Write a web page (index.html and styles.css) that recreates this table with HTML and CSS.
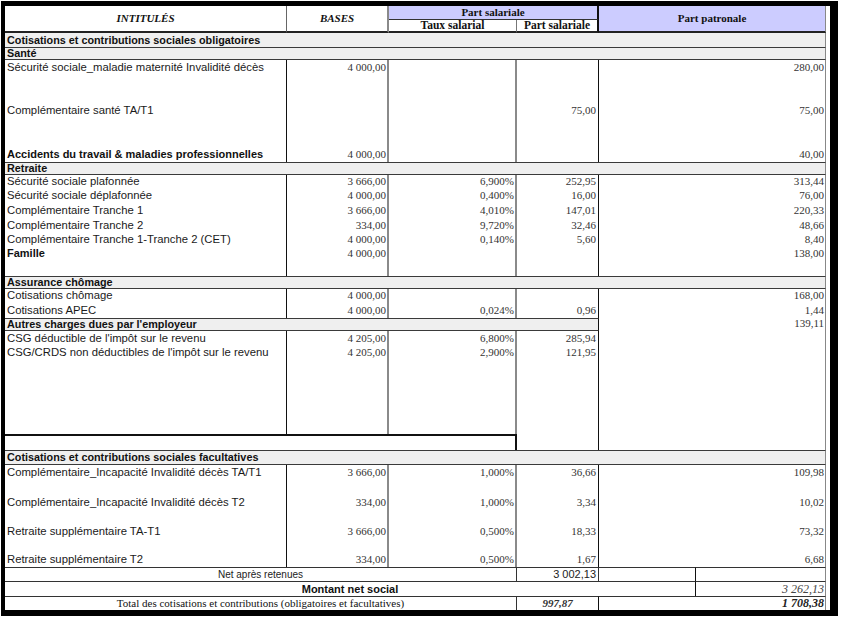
FILE: index.html
```html
<!DOCTYPE html>
<html lang="fr">
<head>
<meta charset="utf-8">
<title>Cotisations et contributions sociales</title>
<link rel="stylesheet" href="styles.css">
</head>
<body>
<div class="frame">
<table class="sheet">
<colgroup>
<col class="c-lab"><col class="c-base"><col class="c-taux"><col class="c-ps"><col class="c-pp1"><col class="c-pp2">
</colgroup>
<thead>
<tr class="h14">
<th class="hd hd-int" rowspan="2">INTITULÉS</th>
<th class="hd hd-bases" rowspan="2">BASES</th>
<th class="hd hd-ps" colspan="2">Part salariale</th>
<th class="hd hd-pp" colspan="2" rowspan="2">Part patronale</th>
</tr>
<tr class="h12">
<th class="hd hd-taux">Taux salarial</th>
<th class="hd hd-ps2">Part salariale</th>
</tr>
</thead>
<tbody>
<tr class="h15"><td class="sec" colspan="6">Cotisations et contributions sociales obligatoires</td></tr>
<tr class="h12"><td class="sec" colspan="6">Santé</td></tr>
<tr class="h15"><td class="lab">Sécurité sociale_maladie maternité Invalidité décès</td><td class="num base">4 000,00</td><td class="num taux"></td><td class="num ps"></td><td class="num pp" colspan="2">280,00</td></tr>
<tr class="h43"><td class="lab">Complémentaire santé TA/T1</td><td class="num base"></td><td class="num taux"></td><td class="num ps">75,00</td><td class="num pp" colspan="2">75,00</td></tr>
<tr class="h44"><td class="lab b">Accidents du travail &amp; maladies professionnelles</td><td class="num base">4 000,00</td><td class="num taux"></td><td class="num ps"></td><td class="num pp" colspan="2">40,00</td></tr>
<tr class="h13"><td class="sec t" colspan="6">Retraite</td></tr>
<tr class="h14"><td class="lab">Sécurité sociale plafonnée</td><td class="num base">3 666,00</td><td class="num taux">6,900%</td><td class="num ps">252,95</td><td class="num pp" colspan="2">313,44</td></tr>
<tr class="h14"><td class="lab">Sécurité sociale déplafonnée</td><td class="num base">4 000,00</td><td class="num taux">0,400%</td><td class="num ps">16,00</td><td class="num pp" colspan="2">76,00</td></tr>
<tr class="h15"><td class="lab">Complémentaire Tranche 1</td><td class="num base">3 666,00</td><td class="num taux">4,010%</td><td class="num ps">147,01</td><td class="num pp" colspan="2">220,33</td></tr>
<tr class="h15"><td class="lab">Complémentaire Tranche 2</td><td class="num base">334,00</td><td class="num taux">9,720%</td><td class="num ps">32,46</td><td class="num pp" colspan="2">48,66</td></tr>
<tr class="h14"><td class="lab">Complémentaire Tranche 1-Tranche 2 (CET)</td><td class="num base">4 000,00</td><td class="num taux">0,140%</td><td class="num ps">5,60</td><td class="num pp" colspan="2">8,40</td></tr>
<tr class="h14"><td class="lab b">Famille</td><td class="num base">4 000,00</td><td class="num taux"></td><td class="num ps"></td><td class="num pp" colspan="2">138,00</td></tr>
<tr class="h15"><td class="lab"></td><td class="num base"></td><td class="num taux"></td><td class="num ps"></td><td class="num pp" colspan="2"></td></tr>
<tr class="h13"><td class="sec t" colspan="6">Assurance chômage</td></tr>
<tr class="h14"><td class="lab">Cotisations chômage</td><td class="num base">4 000,00</td><td class="num taux"></td><td class="num ps"></td><td class="num pp" colspan="2">168,00</td></tr>
<tr class="h15"><td class="lab">Cotisations APEC</td><td class="num base">4 000,00</td><td class="num taux">0,024%</td><td class="num ps">0,96</td><td class="num pp" colspan="2">1,44</td></tr>
<tr class="h13"><td class="sec t sec-part" colspan="4">Autres charges dues par l'employeur</td><td class="num pp" colspan="2">139,11</td></tr>
<tr class="h15"><td class="lab">CSG déductible de l'impôt sur le revenu</td><td class="num base">4 205,00</td><td class="num taux">6,800%</td><td class="num ps">285,94</td><td class="num pp" colspan="2"></td></tr>
<tr class="h14"><td class="lab">CSG/CRDS non déductibles de l'impôt sur le revenu</td><td class="num base">4 205,00</td><td class="num taux">2,900%</td><td class="num ps">121,95</td><td class="num pp" colspan="2"></td></tr>
<tr class="h74"><td class="lab"></td><td class="num base"></td><td class="num taux"></td><td class="num ps"></td><td class="num pp" colspan="2"></td></tr>
<tr class="h16"><td class="box" colspan="3"></td><td class="num ps"></td><td class="num pp" colspan="2"></td></tr>
<tr class="h15"><td class="sec t" colspan="6">Cotisations et contributions sociales facultatives</td></tr>
<tr class="h15"><td class="lab">Complémentaire_Incapacité Invalidité décès TA/T1</td><td class="num base">3 666,00</td><td class="num taux">1,000%</td><td class="num ps">36,66</td><td class="num pp" colspan="2">109,98</td></tr>
<tr class="h30"><td class="lab">Complémentaire_Incapacité Invalidité décès T2</td><td class="num base">334,00</td><td class="num taux">1,000%</td><td class="num ps">3,34</td><td class="num pp" colspan="2">10,02</td></tr>
<tr class="h29"><td class="lab">Retraite supplémentaire TA-T1</td><td class="num base">3 666,00</td><td class="num taux">0,500%</td><td class="num ps">18,33</td><td class="num pp" colspan="2">73,32</td></tr>
<tr class="h28"><td class="lab">Retraite supplémentaire T2</td><td class="num base">334,00</td><td class="num taux">0,500%</td><td class="num ps">1,67</td><td class="num pp" colspan="2">6,68</td></tr>
<tr class="h14 foot"><td class="net" colspan="3">Net après retenues</td><td class="netv">3 002,13</td><td class="fcell fsplit"></td><td class="fcell fend"></td></tr>
<tr class="h15 foot"><td class="mont fsplit" colspan="5">Montant net social</td><td class="montv fend">3 262,13</td></tr>
<tr class="h14 foot"><td class="tot" colspan="3">Total des cotisations et contributions (obligatoires et facultatives)</td><td class="totv">997,87</td><td class="totp fend" colspan="2">1 708,38</td></tr>
</tbody>
</table>
</div>
</body>
</html>
```

FILE: styles.css
```css
html, body {
  margin: 0;
  padding: 0;
  background: #ffffff;
}

body {
  font-family: "Liberation Sans", Arial, sans-serif;
  color: #1a1a1a;
}

.frame {
  display: inline-block;
  margin: 1px 0 0 1px;
  border-style: solid;
  border-color: #000;
  border-width: 5px 8px 6px 4px;
  padding-right: 4px;
  background: #fff;
}

.sheet {
  table-layout: fixed;
  border-collapse: separate;
  border-spacing: 0;
  width: 821px;
}

.c-lab { width: 282px; }
.c-base { width: 102px; }
.c-taux { width: 128px; }
.c-ps { width: 82px; }
.c-pp1 { width: 97px; }
.c-pp2 { width: 130px; }

.sheet td,
.sheet th {
  padding: 0;
  font-size: 11px;
  line-height: 11px;
  white-space: nowrap;
  overflow: visible;
}

.h12 { height: 12px; }
.h13 { height: 13px; }
.h14 { height: 14px; }
.h15 { height: 15px; }
.h16 { height: 16px; }
.h28 { height: 28px; }
.h29 { height: 29px; }
.h30 { height: 30px; }
.h43 { height: 43px; }
.h44 { height: 44px; }
.h74 { height: 74px; }

/* header */
.hd {
  font-family: "Liberation Serif", "Times New Roman", serif;
  font-weight: bold;
  color: #111;
  text-align: center;
  vertical-align: middle;
  line-height: 10px;
}
.hd-int,
.hd-bases {
  font-style: italic;
  background: #fff;
  border-bottom: 2px solid #222;
}
.hd-int { border-right: 1px solid #666; }
.hd-bases { border-right: 2px solid #8a8a8a; }
.hd-ps {
  background: #ccccff;
  border-bottom: 1px solid #333;
  border-right: 2px solid #111;
}
.hd-pp {
  background: #ccccff;
  border-bottom: 2px solid #222;
  border-right: 1px solid #888;
}
.hd-taux {
  background: #fff;
  border-bottom: 2px solid #222;
  border-right: 1px solid #777;
  font-size: 11.5px !important;
}
.hd-ps2 {
  background: #fff;
  border-bottom: 2px solid #222;
  border-right: 2px solid #111;
  font-size: 11.5px !important;
}

/* section rows */
.sec {
  background: #efefef;
  font-weight: bold;
  font-size: 10.8px !important;
  color: #111;
  padding-left: 2px !important;
  vertical-align: middle;
  border-bottom: 1px solid #3a3a3a;
  border-right: 1px solid #888;
}
.sec.t { border-top: 1px solid #3a3a3a; }
.sec.sec-part { border-right: 1px solid #111; }

/* data cells */
.lab {
  font-size: 11.3px !important;
  padding-left: 2px !important;
  vertical-align: bottom;
  padding-bottom: 2px !important;
  border-right: 1px solid #111;
  color: #1a1a1a;
}
.lab.b { font-weight: bold; font-size: 11px !important; color: #111; }

.num {
  font-family: "Liberation Serif", "Times New Roman", serif;
  color: #333;
  text-align: right;
  vertical-align: bottom;
  padding-bottom: 2px !important;
}
.base { border-right: 2px solid #8a8a8a; padding-right: 1px !important; }
.taux { border-right: 2px solid #8a8a8a; padding-right: 1px !important; }
.ps { border-right: 1px solid #111; padding-right: 2px !important; }
.pp { border-right: 1px solid #888; padding-right: 1px !important; }

.box {
  border-top: 2px solid #111;
  border-right: 2px solid #111;
}

/* footer rows */
.foot td { border-top: 1px solid #333; vertical-align: middle; }
.net {
  text-align: center;
  font-size: 10px !important;
  color: #222;
  border-right: 1px solid #333;
}
.netv {
  text-align: right;
  color: #222;
  padding-right: 2px !important;
  border-right: 1px solid #333;
}
.fsplit { border-right: 1px solid #111; }
.fend { border-right: 1px solid #888; }
.mont {
  text-align: center;
  font-weight: bold;
  color: #111;
}
.montv {
  font-family: "Liberation Serif", "Times New Roman", serif;
  font-style: italic;
  font-size: 12px !important;
  color: #444;
  text-align: right;
  padding-right: 1px !important;
}
.tot {
  font-family: "Liberation Serif", "Times New Roman", serif;
  text-align: center;
  color: #111;
  border-right: 1px solid #333;
}
.totv {
  font-family: "Liberation Serif", "Times New Roman", serif;
  font-style: italic;
  font-weight: bold;
  color: #333;
  text-align: center;
  border-right: 1px solid #111;
}
.totp {
  font-family: "Liberation Serif", "Times New Roman", serif;
  font-style: italic;
  font-weight: bold;
  font-size: 12px !important;
  color: #222;
  text-align: right;
  padding-right: 1px !important;
}
```
